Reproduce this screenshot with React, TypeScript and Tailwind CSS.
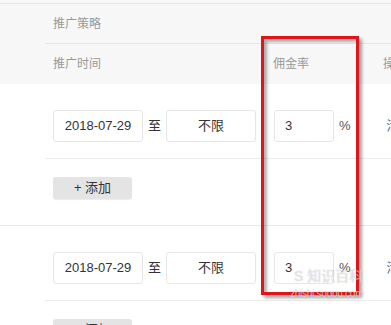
const font = 'font-["Liberation_Sans","Noto_Sans_CJK_SC",sans-serif]';

function RuleRow() {
  return (
    <div className="h-[74px] flex items-start pt-[26px] pl-[53px] whitespace-nowrap -ml-[45px]">
      <div className="shrink-0 w-[90px] h-8 border border-[#e6e6e6] rounded-[3px] flex items-center justify-center text-[13px] text-[#333]">
        2018-07-29
      </div>
      <span className="shrink-0 w-[23px] h-8 flex items-center justify-center text-[13px] text-[#333]">至</span>
      <div className="shrink-0 w-[90px] h-8 border border-[#e6e6e6] rounded-[3px] flex items-center justify-center text-[13px] text-[#333]">
        不限
      </div>
      <div className="shrink-0 w-[18px]" />
      <div className="shrink-0 w-[60px] h-8 border border-[#e6e6e6] rounded-[3px] flex items-center pl-[10px] text-[13px] text-[#333]">
        3
      </div>
      <span className="shrink-0 ml-[5px] h-8 flex items-center text-[13px] text-[#555]">%</span>
      <span className="shrink-0 ml-[36px] h-8 flex items-center text-[13px] text-[#2b6fc2]">清除</span>
    </div>
  );
}

function Group({ last }: { last?: boolean }) {
  return (
    <div className={last ? "" : "border-b border-[#e8e8e8]"}>
      <div className="ml-[45px] border-b border-[#ececec] overflow-visible">
        <RuleRow />
      </div>
      <div className="h-[66px] pt-4 pl-[53px]">
        <button className="w-[79px] h-[22px] bg-[#e4e4e4] rounded-[3px] text-[13px] text-[#333] shadow-[0_1px_1px_rgba(0,0,0,0.08)]">
          + 添加
        </button>
      </div>
    </div>
  );
}

export default function App() {
  return (
    <div className={`relative w-[391px] h-[325px] overflow-hidden bg-white ${font}`}>
      <div className="h-[4px] bg-[#f7f7f7] border-b border-[#e6e6e6]" />
      <div className="bg-[#f7f7f7] text-[12px] text-[#999]">
        <div className="ml-[45px] h-[40px] border-b border-[#e6e6e6] flex items-center pl-2">
          推广策略
        </div>
        <div className="h-[40px] flex items-center pl-[53px] whitespace-nowrap">
          <span className="shrink-0 w-[220px]">推广时间</span>
          <span className="shrink-0 w-[110px]">佣金率</span>
          <span className="shrink-0">操作</span>
        </div>
      </div>
      <Group />
      <Group last />

      {/* red highlight box */}
      <div className="absolute left-[261px] top-[36px] w-[98px] h-[259px] border-[3px] border-[#e0141b] shadow-[3px_3px_3px_rgba(0,0,0,0.35),inset_3px_3px_3px_rgba(0,0,0,0.3)]" />

      {/* watermark */}
      <div className="absolute left-[294px] top-[269px] text-[14px] leading-none text-white/60 [text-shadow:0_0_1px_rgba(0,0,0,0.3)]">
        S 知识百科
      </div>
      <div className="absolute left-[290px] top-[289px] text-[10px] leading-none text-white/70 tracking-tight [text-shadow:0_0_1px_rgba(0,0,0,0.35)]">
        zhishi.sogou.com
      </div>
    </div>
  );
}
